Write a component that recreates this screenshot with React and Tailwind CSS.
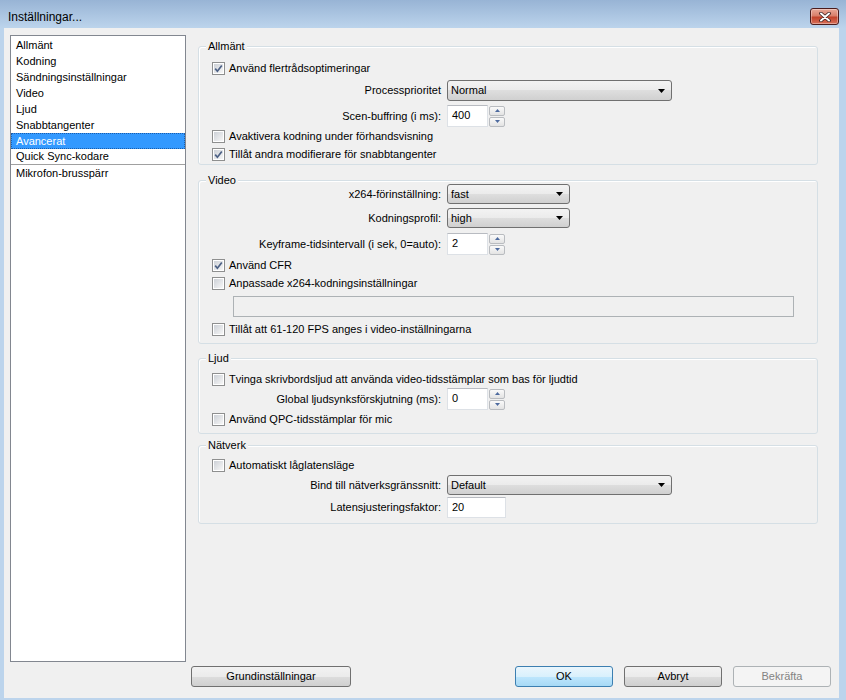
const listItems = [
  'Allmänt',
  'Kodning',
  'Sändningsinställningar',
  'Video',
  'Ljud',
  'Snabbtangenter',
  'Avancerat',
  'Quick Sync-kodare',
];

function CheckBox({ checked }) {
  return (
    <span className="flex h-[13px] w-[13px] shrink-0 border border-[#8e8f8f] bg-white p-[1px]">
      <span className="flex h-full w-full items-center justify-center bg-gradient-to-br from-[#cdd1d7] to-[#f7f7f7]">
        {checked && (
          <svg width="9" height="9" viewBox="0 0 9 9">
            <path d="M1.2 4.6 L3.4 7.2 L7.8 1.4" fill="none" stroke="#4d6185" strokeWidth="1.7" />
          </svg>
        )}
      </span>
    </span>
  );
}

function CheckRow({ checked, label, className }) {
  return (
    <div className={`flex h-[13px] items-center gap-[4px] pl-[13px] ${className}`}>
      <CheckBox checked={checked} />
      <span className="whitespace-nowrap leading-[13px]">{label}</span>
    </div>
  );
}

function Combo({ value, className }) {
  return (
    <div
      className={`flex items-center justify-between rounded-[3px] border border-[#707070] bg-[linear-gradient(to_bottom,#f3f3f3_0%,#ebebeb_50%,#dedede_50%,#d0d0d0_100%)] pl-[3px] pr-[6px] ${className}`}
    >
      <span className="leading-none">{value}</span>
      <svg width="7" height="4" viewBox="0 0 7 4">
        <polygon points="0,0 7,0 3.5,4" fill="#000" />
      </svg>
    </div>
  );
}

function SpinArrow({ up }) {
  return (
    <span className="flex h-[10px] w-[16px] items-center justify-center rounded-[2px] border border-[#b9bcc0] bg-gradient-to-b from-[#fafafa] to-[#e3e3e3]">
      <svg width="5" height="3" viewBox="0 0 5 3">
        <polygon points={up ? '0,3 5,3 2.5,0' : '0,0 5,0 2.5,3'} fill="#4d6a9e" />
      </svg>
    </span>
  );
}

function Spin({ value }) {
  return (
    <div className="flex h-[22px] w-[59px] items-stretch">
      <div className="flex w-[41px] items-start border border-[#dde1e6] border-t-[#b8bbc1] bg-white pl-[4px] pt-[3px]">
        <span className="leading-[13px]">{value}</span>
      </div>
      <div className="ml-[1px] flex flex-col justify-center gap-[1px]">
        <SpinArrow up />
        <SpinArrow />
      </div>
    </div>
  );
}

function FieldRow({ label, children, className }) {
  return (
    <div className={`flex items-center ${className}`}>
      <span className="w-[242px] whitespace-nowrap text-right leading-[13px]">{label}</span>
      <div className="ml-[6px]">{children}</div>
    </div>
  );
}

function Group({ title, className, children }) {
  return (
    <div className={`relative w-[620px] rounded-[3px] border border-[#d5dfe5] shadow-[inset_1px_1px_0_#ffffff] ${className}`}>
      <span className="absolute left-[7px] top-[-7px] bg-[#f0f0f0] px-[2px] leading-[13px]">{title}</span>
      {children}
    </div>
  );
}

function WinButton({ children, variant, className }) {
  const look = {
    normal:
      'border-[#707070] bg-[linear-gradient(to_bottom,#f2f2f2_0%,#ebebeb_50%,#dddddd_50%,#cfcfcf_100%)] text-black',
    default:
      'border-[#3c7fb1] bg-[linear-gradient(to_bottom,#eaf6fd_0%,#d9f0fc_50%,#bee6fd_50%,#a7d9f5_100%)] text-black',
    disabled: 'border-[#adb2b5] bg-[#f4f4f4] text-[#838383]',
  }[variant];
  return (
    <button type="button" className={`flex h-[21px] items-center justify-center rounded-[3px] border ${look} ${className}`}>
      {children}
    </button>
  );
}

export default function App() {
  return (
    <div className="flex h-[700px] w-[846px] flex-col bg-[#bcd4ec] font-['Liberation_Sans',Arial,sans-serif] text-[11px] text-black">
      <div className="flex h-[28px] items-start justify-between bg-gradient-to-b from-[#98b4d5] to-[#bcd4ec] pl-[8px] pr-[7px]">
        <span className="pt-[9px] text-[12px] leading-[16px]">Inställningar...</span>
        <div className="mt-[8px] flex h-[17px] w-[29px] items-center justify-center rounded-[3px] border border-[#4a1c1c] bg-[linear-gradient(to_bottom,#e8a898_0%,#d97f6a_45%,#c2432b_55%,#d7705a_100%)] shadow-[inset_0_0_0_1px_rgba(255,255,255,0.35)]">
          <svg width="12" height="10" viewBox="0 0 12 10">
            <path d="M2 1.5 L10 8.5 M10 1.5 L2 8.5" stroke="#3a2020" strokeWidth="3.6" strokeLinecap="round" />
            <path d="M2 1.5 L10 8.5 M10 1.5 L2 8.5" stroke="#ffffff" strokeWidth="2" strokeLinecap="round" />
          </svg>
        </div>
      </div>

      <div className="mb-[2px] ml-[4px] mr-[7px] flex flex-1 flex-col bg-[#f0f0f0] pl-[6px] pt-[7px]">
        <div className="flex gap-[12px]">
          <div className="h-[627px] w-[176px] border border-[#828790] bg-white pt-[1px]">
            {listItems.map((item) => (
              <div
                key={item}
                className={
                  item === 'Avancerat'
                    ? 'h-[16px] border border-dotted border-[#1a5dad] bg-[#3399ff] pl-[4px] leading-[14px] text-white'
                    : item === 'Quick Sync-kodare'
                      ? 'h-[16px] border-b border-[#a0a0a0] pl-[5px] leading-[15px]'
                      : 'h-[16px] pl-[5px] leading-[16px]'
                }
              >
                {item}
              </div>
            ))}
            <div className="h-[16px] pl-[5px] leading-[16px]">Mikrofon-brusspärr</div>
          </div>

          <div className="mt-[11px] flex flex-col">
            <Group title="Allmänt" className="pb-[3px] pt-[15px]">
              <CheckRow checked label="Använd flertrådsoptimeringar" />
              <FieldRow label="Processprioritet" className="mt-[5px]">
                <Combo value="Normal" className="h-[21px] w-[225px]" />
              </FieldRow>
              <FieldRow label="Scen-buffring (i ms):" className="mt-[4px]">
                <Spin value="400" />
              </FieldRow>
              <CheckRow label="Avaktivera kodning under förhandsvisning" className="mt-[3px]" />
              <CheckRow checked label="Tillåt andra modifierare för snabbtangenter" className="mt-[5px]" />
            </Group>

            <Group title="Video" className="mt-[15px] pb-[7px] pt-[3px]">
              <FieldRow label="x264-förinställning:">
                <Combo value="fast" className="h-[20px] w-[123px]" />
              </FieldRow>
              <FieldRow label="Kodningsprofil:" className="mt-[4px]">
                <Combo value="high" className="h-[20px] w-[123px]" />
              </FieldRow>
              <FieldRow label="Keyframe-tidsintervall (i sek, 0=auto):" className="mt-[5px]">
                <Spin value="2" />
              </FieldRow>
              <CheckRow checked label="Använd CFR" className="mt-[4px]" />
              <CheckRow label="Anpassade x264-kodningsinställningar" className="mt-[5px]" />
              <div className="ml-[34px] mt-[6px] h-[21px] w-[561px] border border-[#adb2b5] bg-[#f0f0f0]" />
              <CheckRow label="Tillåt att 61-120 FPS anges i video-inställningarna" className="mt-[6px]" />
            </Group>

            <Group title="Ljud" className="mt-[14px] pb-[7px] pt-[14px]">
              <CheckRow label="Tvinga skrivbordsljud att använda video-tidsstämplar som bas för ljudtid" />
              <FieldRow label="Global ljudsynksförskjutning (ms):" className="mt-[2px]">
                <Spin value="0" />
              </FieldRow>
              <CheckRow label="Använd QPC-tidsstämplar för mic" className="mt-[3px]" />
            </Group>

            <Group title="Nätverk" className="mt-[11px] pb-[5px] pt-[13px]">
              <CheckRow label="Automatiskt låglatensläge" />
              <FieldRow label="Bind till nätverksgränssnitt:" className="mt-[3px]">
                <Combo value="Default" className="h-[20px] w-[225px]" />
              </FieldRow>
              <FieldRow label="Latensjusteringsfaktor:" className="mt-[2px]">
                <div className="flex h-[21px] w-[59px] items-start border border-[#dde1e6] border-t-[#b8bbc1] bg-white pl-[4px] pt-[3px]">
                  <span className="leading-[13px]">20</span>
                </div>
              </FieldRow>
            </Group>
          </div>
        </div>

        <div className="mt-[4px] flex">
          <WinButton variant="normal" className="ml-[181px] w-[160px]">Grundinställningar</WinButton>
          <div className="ml-auto mr-[8px] flex gap-[11px]">
            <WinButton variant="default" className="w-[98px]">OK</WinButton>
            <WinButton variant="normal" className="w-[98px]">Avbryt</WinButton>
            <WinButton variant="disabled" className="w-[98px]">Bekräfta</WinButton>
          </div>
        </div>
      </div>
    </div>
  );
}
